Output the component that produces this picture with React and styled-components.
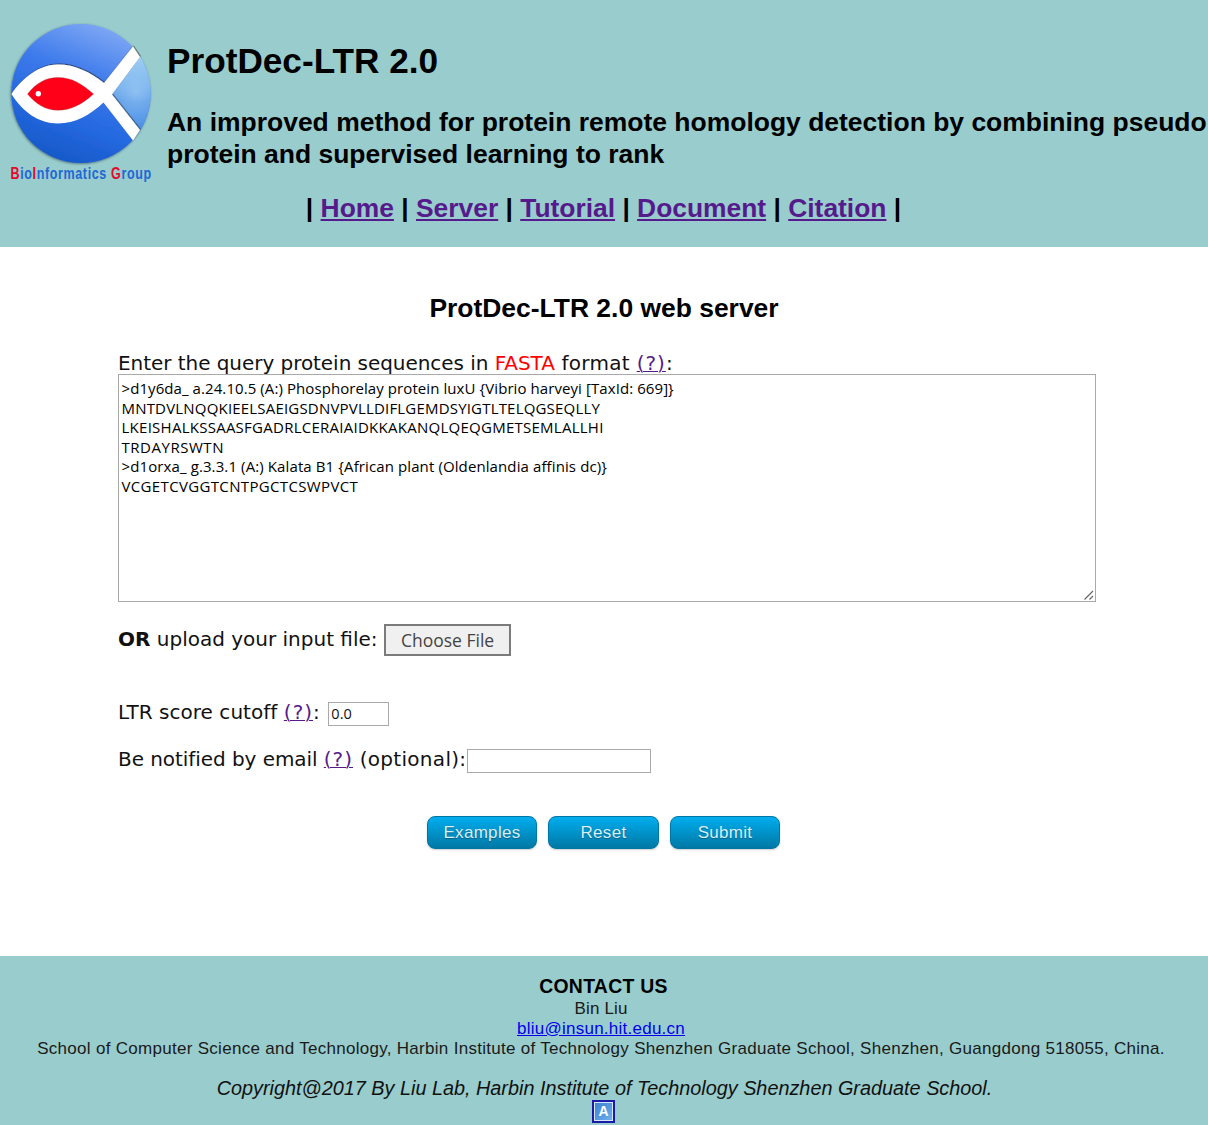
import React from 'react';
import styled, { createGlobalStyle } from 'styled-components';

const arial = '"Liberation Sans", Arial, sans-serif';
const verdana = '"DejaVu Sans", Verdana, sans-serif';
const humanist = '"Open Sans", "Noto Sans", sans-serif';

const Global = createGlobalStyle`
  *, *::before, *::after { box-sizing: border-box; }
  body { margin: 0; background: #fff; color: #000; font-family: ${arial}; }
`;

const Page = styled.div`
  display: flex;
  flex-direction: column;
  width: 1208px;
  height: 1125px;
  overflow: hidden;
`;

const Header = styled.header`
  height: 247px;
  flex: none;
  background: #99cccc;
`;

const Brand = styled.div`
  display: flex;
  gap: 11px;
  height: 191px;
  padding: 19px 0 0 6px;
`;

const LogoArt = styled.svg`
  flex: none;
  width: 150px;
  height: 170px;
`;

const BrandText = styled.div`
  padding-top: 22px;
  white-space: nowrap;
`;

const Title = styled.h1`
  margin: 0 0 25px;
  font-size: 35.2px;
  line-height: 40px;
`;

const Subtitle = styled.h2`
  margin: 0;
  font-size: 26.47px;
  line-height: 32px;
`;

const Nav = styled.nav`
  padding-left: 3px;
  padding-right: 4px;
  text-align: center;
  font-size: 26.4px;
  font-weight: bold;
  line-height: 35px;
`;

const NavLink = styled.a`
  color: #551a8b;
  text-decoration: underline;
`;

const Main = styled.main`
  height: 709px;
  flex: none;
  padding: 45px 112px 0 118px;
`;

const PageTitle = styled.h2`
  margin: 0 -112px 28px -118px;
  text-align: center;
  font-size: 26.44px;
  line-height: 32px;
`;

const Field = styled.div`
  display: flex;
  align-items: center;
  height: ${p => p.$height}px;
  margin-bottom: ${p => p.$after}px;
  font-family: ${verdana};
  font-size: 20px;
  letter-spacing: ${p => p.$spacing || 0}px;
  color: #111;
  white-space: pre;
`;

const Label = styled.span`
  padding-bottom: ${p => p.$lift}px;
`;

const Loose = styled.span`
  letter-spacing: 0.3px;
`;

const Help = styled.a`
  color: #551a8b;
  letter-spacing: 1px;
  text-decoration: underline;
  text-decoration-thickness: 1px;
`;

const Red = styled.span`
  color: #ff0000;
`;

const SequenceBox = styled.div`
  position: relative;
  width: 978px;
  height: 228px;
  margin-bottom: 22px;
  padding: 4px 2.5px;
  border: 1px solid #a9a9a9;
  font-family: ${humanist};
  font-size: 15px;
  line-height: 19.6px;
`;

const SequenceLine = styled.div`
  white-space: pre;
  letter-spacing: ${p => p.$spacing}px;
`;

const Grip = styled.svg`
  position: absolute;
  right: 1px;
  bottom: 1px;
  width: 10px;
  height: 10px;
`;

const FileButton = styled.button`
  width: 127px;
  height: 32px;
  margin-left: 6px;
  padding: 0 0 1px 1px;
  border: 2px solid #7b7b7b;
  background: #f0f0f0;
  color: #444;
  font-family: ${humanist};
  font-size: 17.5px;
  letter-spacing: 0;
  line-height: 24px;
`;

const TextInput = styled.input`
  width: ${p => p.$width}px;
  height: 24px;
  margin-left: ${p => p.$gap}px;
  margin-top: 4px;
  padding: 0 2px 1px;
  border: 1px solid #a9a9a9;
  background: #fff;
  font-family: ${humanist};
  font-size: 14.5px;
  color: #111;
`;

const Actions = styled.div`
  display: flex;
  justify-content: center;
  gap: 11px;
  margin: 0 -112px 0 -119px;
`;

const ActionButton = styled.button`
  width: 110.5px;
  height: 33px;
  padding: 0;
  border: 1px solid #0076a3;
  border-radius: 8px;
  background: linear-gradient(to bottom, #00adee, #0078a5);
  box-shadow: 0 1px 2px rgba(0, 0, 0, 0.2);
  color: #d9eef7;
  font-family: ${arial};
  font-size: 17px;
  letter-spacing: 0.3px;
  text-shadow: 0 1px 1px rgba(0, 0, 0, 0.3);
`;

const Footer = styled.footer`
  display: flex;
  flex-direction: column;
  align-items: center;
  flex: 1;
  padding-top: 18px;
  background: #99cccc;
`;

const ContactTitle = styled.strong`
  padding-right: 1px;
  margin-bottom: 1px;
  font-size: 19.4px;
  line-height: 24px;
  letter-spacing: 0.3px;
`;

const ContactLine = styled.div`
  padding-right: 6px;
  font-size: 17px;
  line-height: 19.8px;
  letter-spacing: ${p => p.$spacing}px;
  color: #1a1a1a;
  white-space: nowrap;
`;

const MailLink = styled.a`
  color: #0000ee;
`;

const Copyright = styled.em`
  margin-top: 18px;
  padding-left: 1px;
  font-size: 19.83px;
  line-height: 24px;
  color: #111;
`;

const StatsBadge = styled.span`
  display: flex;
  align-items: center;
  justify-content: center;
  width: 23px;
  height: 23px;
  margin-right: 1px;
  border: 2px solid #1a1aa6;
  background: linear-gradient(135deg, #3b7fd0, #6fb0ee);
  box-shadow: inset 0 0 0 1px #d5e8fa;
  color: #fff;
  font-size: 14px;
  font-weight: bold;
  line-height: 19px;
`;

function Logo() {
  return (
    <LogoArt viewBox="6 19 150 170" role="img" aria-label="BioInformatics Group">
      <defs>
        <linearGradient id="ball" x1="0.7" y1="0" x2="0.3" y2="1">
          <stop offset="0" stopColor="#82aaf5" />
          <stop offset="0.38" stopColor="#3d7aeb" />
          <stop offset="0.7" stopColor="#2468df" />
          <stop offset="1" stopColor="#1557c6" />
        </linearGradient>
        <radialGradient id="tail" gradientUnits="userSpaceOnUse" cx="136" cy="92" r="42">
          <stop offset="0" stopColor="#86baf0" />
          <stop offset="1" stopColor="#4289e4" />
        </radialGradient>
        <linearGradient id="glow" x1="0" y1="0" x2="0" y2="1">
          <stop offset="0" stopColor="#b4dff8" stopOpacity="0.8" />
          <stop offset="0.6" stopColor="#b4dff8" stopOpacity="0" />
        </linearGradient>
        <filter id="soft" x="-10%" y="-10%" width="120%" height="120%">
          <feDropShadow dx="-0.6" dy="0.8" stdDeviation="0.8" floodColor="#203850" floodOpacity="0.65" />
        </filter>
        <filter id="edge" x="-10%" y="-10%" width="120%" height="120%">
          <feDropShadow dx="0.6" dy="-1" stdDeviation="0.7" floodColor="#222" floodOpacity="0.65" />
        </filter>
        <clipPath id="disc"><circle cx="81" cy="93.5" r="69.8" /></clipPath>
      </defs>
      <circle cx="81" cy="93.5" r="69.6" fill="url(#ball)" filter="url(#soft)" />
      <g clipPath="url(#disc)">
        <path d="M112 94.5L140 57H153V131H140Z" fill="url(#tail)" />
        <path d="M112 94.5L140 57H153V131H140Z" fill="url(#glow)" />
      </g>
      <g filter="url(#edge)">
        <path
          fill="#fff"
          d="M11.5 94C23 77 40 64.5 58 64.5C75 64.5 90 72 104 83L133 46.5L140 57L112 94.5L140 130L133 140.5L103.5 102.5C90 115 75 123.5 58 123.5C38 123.5 22 111 11.5 94Z"
        />
      </g>
      <path d="M27.5 94C36 83 46 77.5 58 77.5C72 77.5 82 84 93.5 94C82 104.5 71 110.2 58 110.2C45 110.2 36 104 27.5 94Z" fill="#ff0018" stroke="#8a3a3a" strokeOpacity="0.45" strokeWidth="0.7" />
      <circle cx="38.3" cy="93.8" r="2.7" fill="#fff" />
      <g transform="translate(10.5 179.3) scale(0.76 1)" fontFamily="Liberation Sans, sans-serif" fontWeight="bold" fontSize="16.5" fill="#2167d4">
        <text textLength="185" lengthAdjust="spacing">
          <tspan fill="#e5092b">B</tspan>io<tspan fill="#e5092b">I</tspan>nformatics <tspan fill="#e5092b">G</tspan>roup
        </text>
      </g>
    </LogoArt>
  );
}

const pages = ['Home', 'Server', 'Tutorial', 'Document', 'Citation'];

const sequences = [
  ['>d1y6da_ a.24.10.5 (A:) Phosphorelay protein luxU {Vibrio harveyi [TaxId: 669]}', 0.08],
  ['MNTDVLNQQKIEELSAEIGSDNVPVLLDIFLGEMDSYIGTLTELQGSEQLLY', 0.19],
  ['LKEISHALKSSAASFGADRLCERAIAIDKKAKANQLQEQGMETSEMLALLHI', 0.26],
  ['TRDAYRSWTN', 0.53],
  ['>d1orxa_ g.3.3.1 (A:) Kalata B1 {African plant (Oldenlandia affinis dc)}', 0.11],
  ['VCGETCVGGTCNTPGCTCSWPVCT', 0.35],
];

export default function App() {
  return (
    <Page>
      <Global />
      <Header>
        <Brand>
          <Logo />
          <BrandText>
            <Title>ProtDec-LTR 2.0</Title>
            <Subtitle>
              An improved method for protein remote homology detection by combining pseudo
              <br />
              protein and supervised learning to rank
            </Subtitle>
          </BrandText>
        </Brand>
        <Nav>
          |{pages.map(name => (
            <React.Fragment key={name}> <NavLink href="#">{name}</NavLink> |</React.Fragment>
          ))}
        </Nav>
      </Header>

      <Main>
        <PageTitle>ProtDec-LTR 2.0 web server</PageTitle>
        <Field $height={22} $after={0} $spacing={-0.05}>
          <Label $lift={0}>Enter the query protein sequences in <Red>FASTA</Red><Loose> format </Loose><Help href="#">(?)</Help>:</Label>
        </Field>
        <SequenceBox>
          {sequences.map(([text, spacing]) => (
            <SequenceLine key={text} $spacing={spacing}>{text}</SequenceLine>
          ))}
          <Grip viewBox="0 0 10 10" stroke="#666" strokeWidth="1.2" fill="none">
            <path d="M0.5 9.5L9 1M5.5 9.5L9 6" />
          </Grip>
        </SequenceBox>
        <Field $height={32} $after={44}>
          <Label $lift={2}><b>OR</b> upload your input file:</Label>
          <FileButton type="button">Choose File</FileButton>
        </Field>
        <Field $height={24} $after={23} $spacing={0.04}>
          <Label $lift={0}>LTR score cutoff <Help href="#">(?)</Help>:</Label>
          <TextInput $width={61} $gap={8.5} defaultValue="0.0" />
        </Field>
        <Field $height={24} $after={45} $spacing={-0.06}>
          <Label $lift={1}>Be notified by email <Help href="#">(?)</Help><Loose> (optional):</Loose></Label>
          <TextInput $width={184} $gap={0.5} />
        </Field>
        <Actions>
          <ActionButton type="button">Examples</ActionButton>
          <ActionButton type="button">Reset</ActionButton>
          <ActionButton type="button">Submit</ActionButton>
        </Actions>
      </Main>

      <Footer>
        <ContactTitle>CONTACT US</ContactTitle>
        <ContactLine $spacing={0.15}>Bin Liu</ContactLine>
        <ContactLine $spacing={0.25}><MailLink href="#">bliu@insun.hit.edu.cn</MailLink></ContactLine>
        <ContactLine $spacing={0.29}>
          School of Computer Science and Technology, Harbin Institute of Technology Shenzhen Graduate School, Shenzhen, Guangdong 518055, China.
        </ContactLine>
        <Copyright>Copyright@2017 By Liu Lab, Harbin Institute of Technology Shenzhen Graduate School.</Copyright>
        <StatsBadge>A</StatsBadge>
      </Footer>
    </Page>
  );
}
